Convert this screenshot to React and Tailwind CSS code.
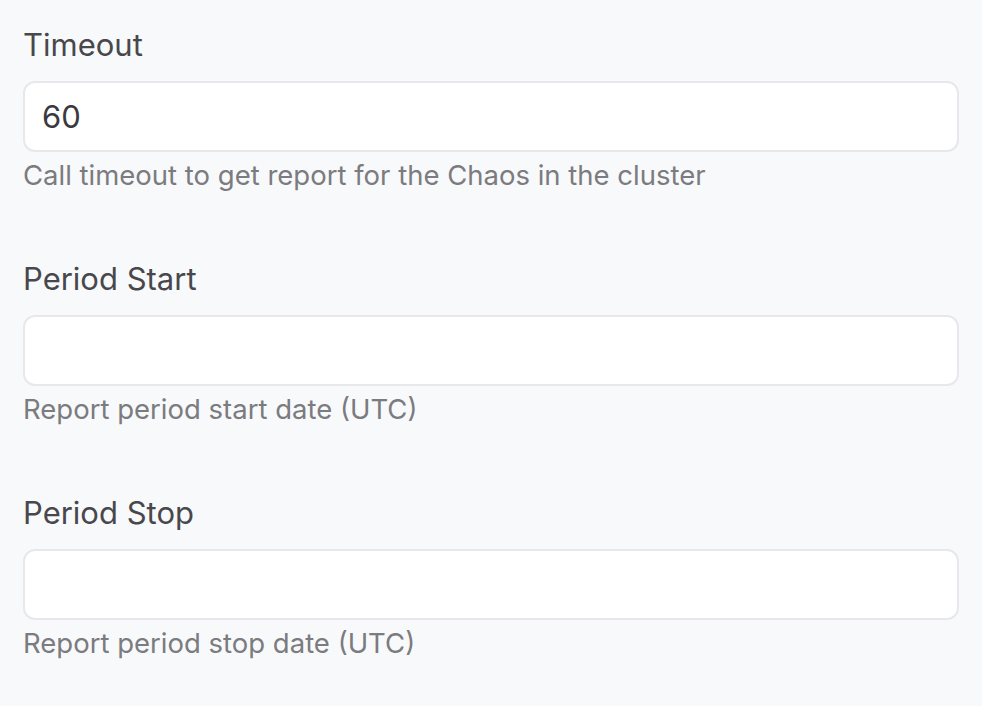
import { useState } from "react";

const Field = ({ label, value, onChange, help }) => (
  <div className="flex flex-col">
    <label className="text-[31px] leading-[38px] text-[#48484c]">{label}</label>
    <input
      type="text"
      value={value}
      onChange={(e) => onChange(e.target.value)}
      className="mt-[17px] h-[71px] w-full rounded-[12px] border-2 border-[#e8e8ec] bg-white px-[17px] text-[31px] text-[#3a3a3e] outline-none"
    />
    <p className="mt-[5px] text-[27.5px] leading-[36px] text-[#7b7b80]">{help}</p>
  </div>
);

export default function App() {
  const [timeout, setTimeoutValue] = useState("60");
  const [start, setStart] = useState("");
  const [stop, setStop] = useState("");

  return (
    <div
      className="min-h-[706px] bg-[#f8f9fb] px-[23px] pt-[26px]"
      style={{ fontFamily: "Inter, 'Noto Sans', sans-serif" }}
    >
      <div className="flex flex-col gap-[67px]">
        <Field
          label="Timeout"
          value={timeout}
          onChange={setTimeoutValue}
          help="Call timeout to get report for the Chaos in the cluster"
        />
        <Field
          label="Period Start"
          value={start}
          onChange={setStart}
          help="Report period start date (UTC)"
        />
        <Field
          label="Period Stop"
          value={stop}
          onChange={setStop}
          help="Report period stop date (UTC)"
        />
      </div>
    </div>
  );
}
